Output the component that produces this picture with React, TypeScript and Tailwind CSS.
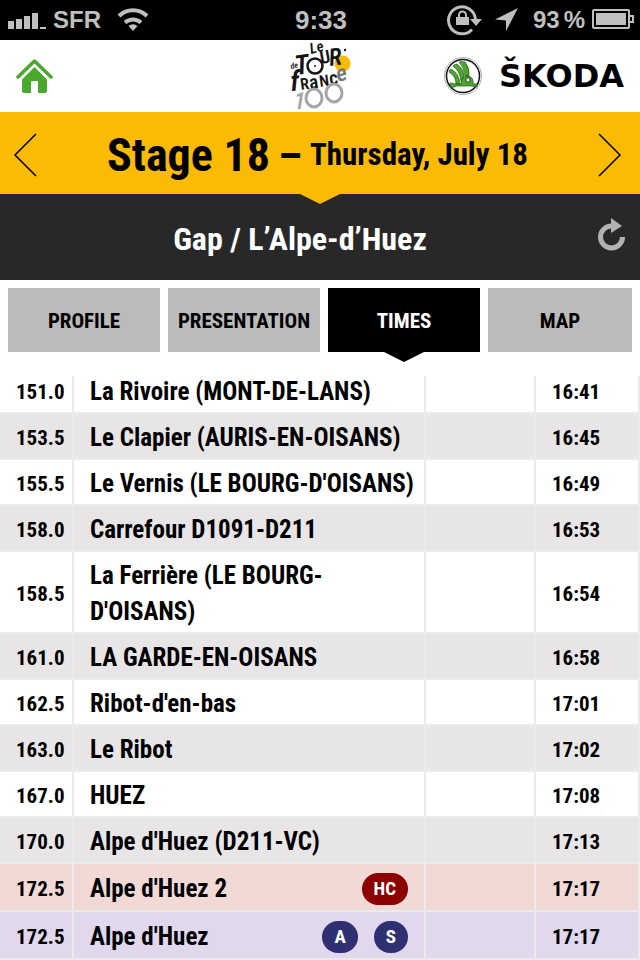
import type { ReactNode } from 'react';

interface Badge {
  label: string;
  className: string;
}

interface Stop {
  km: string;
  name: string;
  time: string;
  rowClass?: string;
  badges?: Badge[];
}

const blueBadge = 'bg-[#2f3072]';

const stops: Stop[] = [
  { km: '151.0', name: 'La Rivoire (MONT-DE-LANS)', time: '16:41' },
  { km: '153.5', name: 'Le Clapier (AURIS-EN-OISANS)', time: '16:45' },
  { km: '155.5', name: "Le Vernis (LE BOURG-D'OISANS)", time: '16:49' },
  { km: '158.0', name: 'Carrefour D1091-D211', time: '16:53' },
  { km: '158.5', name: "La Ferrière (LE BOURG-D'OISANS)", time: '16:54' },
  { km: '161.0', name: 'LA GARDE-EN-OISANS', time: '16:58' },
  { km: '162.5', name: "Ribot-d'en-bas", time: '17:01' },
  { km: '163.0', name: 'Le Ribot', time: '17:02' },
  { km: '167.0', name: 'HUEZ', time: '17:08' },
  { km: '170.0', name: "Alpe d'Huez (D211-VC)", time: '17:13' },
  {
    km: '172.5',
    name: "Alpe d'Huez 2",
    time: '17:17',
    rowClass: 'bg-[#f1dad6]',
    badges: [{ label: 'HC', className: 'bg-[#8b0000]' }],
  },
  {
    km: '172.5',
    name: "Alpe d'Huez",
    time: '17:17',
    rowClass: 'bg-[#e1d8ee]',
    badges: [
      { label: 'A', className: blueBadge },
      { label: 'S', className: blueBadge },
    ],
  },
];

const tabs = ['PROFILE', 'PRESENTATION', 'TIMES', 'MAP'];

const StatusBar = () => (
  <div className="grid h-10 grid-cols-3 items-center bg-black pr-[5px] pl-[7px] font-['Liberation_Sans',Arial,sans-serif] text-2xl font-bold text-[#bfbfbf]">
    <div className="flex items-center">
      <svg className="h-6 w-10 shrink-0" viewBox="0 0 40 24" fill="currentColor">
        <path d="M1 13h6v8H1zM9 11h6v10H9zM17 8h6v13h-6zM25 5h6v16h-6zM33 19h6v2h-6z" />
      </svg>
      <span className="ml-1.5">SFR</span>
      <svg className="ml-4 h-6 w-8 shrink-0" viewBox="0 0 32 24" fill="none" stroke="currentColor" strokeWidth="4">
        <path d="M2 8A20 20 0 0 1 30 8" />
        <path d="M8 14.500A12 12 0 0 1 24 14.500" />
        <path d="M16 23l-4.500-5a6.500 6.500 0 0 1 9 0z" fill="currentColor" stroke="none" />
      </svg>
    </div>
    <span className="text-center text-[26px]">9:33</span>
    <div className="flex items-center justify-end">
      <svg className="h-8 w-9 shrink-0" viewBox="0 0 36 32" fill="none" stroke="currentColor" strokeWidth="3">
        <path d="M25 25.500A13.500 13.500 0 1 1 28.500 15" />
        <path d="M23 15h12l-6 7z" fill="currentColor" stroke="none" />
        <path d="M9 13h13v8H9z" fill="currentColor" stroke="none" />
        <path d="M12 13v-2a3.500 3.500 0 0 1 7 0v2" strokeWidth="2" />
      </svg>
      <svg className="ml-3 h-6 w-6 shrink-0" viewBox="0 0 24 24" fill="currentColor">
        <path d="M23 0L11 23V12.500L0 11.500z" />
      </svg>
      <span className="ml-3.5">93</span>
      <span className="ml-1">%</span>
      <svg className="ml-1.5 h-6 w-11 shrink-0" viewBox="0 0 44 24" fill="none" stroke="currentColor" strokeWidth="2">
        <rect x="2" y="2" width="36" height="18" rx="1" />
        <path d="M5 5h30v12H5z" fill="currentColor" stroke="none" />
        <path d="M38 8h4v6h-4" />
      </svg>
    </div>
  </div>
);

const TourLogo = () => (
  <svg
    className="h-[72px] w-16 overflow-visible"
    viewBox="0 0 64 72"
    role="img"
    aria-label="Le Tour de France 100"
    fontFamily="'Roboto Condensed', 'Liberation Sans', sans-serif"
    fontWeight="600"
    fill="#141414"
  >
    <circle cx="54.500" cy="23.500" r="8" fill="#fbba07" />
    <text x="23" y="14" fontSize="15" fontStyle="italic" transform="rotate(-14 23 14)">Le</text>
    <text x="3" y="29" fontSize="8" fontStyle="italic" transform="rotate(-12 3 29)">de</text>
    <text x="8" y="35" fontSize="27" fontStyle="italic" transform="rotate(-8 8 35)">T</text>
    <circle cx="27" cy="26" r="7.500" fill="none" stroke="#141414" strokeWidth="2.500" />
    <circle cx="27" cy="26" r="1" />
    <text x="33" y="24" fontSize="18" transform="rotate(-10 33 24)">U</text>
    <text x="42" y="26" fontSize="24" fontStyle="italic" transform="rotate(-8 42 26)">R</text>
    <circle cx="57" cy="10" r="1.200" />
    <text x="3" y="51" fontSize="28" fontStyle="italic" transform="rotate(-4 3 51)">f</text>
    <text x="13" y="50" fontSize="16" transform="rotate(-8 13 50)">R</text>
    <text x="22" y="49" fontSize="19" transform="rotate(-8 22 49)">a</text>
    <text x="32" y="47" fontSize="16" transform="rotate(-8 32 47)">N</text>
    <text x="42" y="45" fontSize="19" transform="rotate(-8 42 45)">c</text>
    <text x="50" y="42" fontSize="23" fontStyle="italic" fill="#777" transform="rotate(-14 50 42)">e</text>
    <text x="6" y="69" fontSize="23" fontStyle="italic" fill="#a5a5a5">1</text>
    <ellipse cx="26" cy="58" rx="8" ry="9" fill="none" stroke="#a5a5a5" strokeWidth="3" />
    <ellipse cx="46" cy="53" rx="8" ry="9" fill="none" stroke="#a5a5a5" strokeWidth="3" />
  </svg>
);

const SkodaLogo = () => (
  <a href="#skoda" className="flex items-center gap-4 text-black">
    <svg className="size-10 shrink-0" viewBox="0 0 40 40">
      <circle cx="20" cy="20" r="18.500" fill="#fff" stroke="#a4afb8" />
      <circle cx="20" cy="20" r="16.500" fill="#fff" stroke="#111" strokeWidth="1.500" />
      <g fill="#4ba82e" stroke="#173d12" strokeWidth="0.600">
        <path d="M16 6q2-1 6 0 5 6 4 14h-4Q21 11 16 6z" />
        <path d="M10 10q2-2 4-2 7 5 7 14l-3 3Q17 15 10 10z" />
        <path d="M6 16q0-2 2-3 8 4 9 15h-4Q13 20 6 16z" />
        <path d="M7 27l6 1h5q0-8 7-8 6 1 5 8h4v3l-6-1H14l-6 2z" />
      </g>
      <circle cx="25" cy="24" r="2.200" fill="#fff" stroke="#173d12" />
    </svg>
    <span className="font-['DejaVu_Sans',sans-serif] text-[32px] font-bold">ŠKODA</span>
  </a>
);

const Header = () => (
  <header className="grid h-[72px] grid-cols-[1fr_auto_1fr] items-center bg-white px-4">
    <a href="#home" aria-label="Home" className="w-10">
      <svg className="h-9 w-[37px]" viewBox="0 0 37 36" fill="#4aa82d">
        <path d="M2 19L18.500 3 35 19" fill="none" stroke="#4aa82d" strokeWidth="3.500" strokeLinecap="round" strokeLinejoin="round" />
        <path d="M18.500 9L31 21.500V33a2 2 0 0 1-2 2h-7V24a1 1 0 0 0-1-1h-5a1 1 0 0 0-1 1v11H8a2 2 0 0 1-2-2V21.500z" />
      </svg>
    </a>
    <TourLogo />
    <div className="flex justify-end">
      <SkodaLogo />
    </div>
  </header>
);

const ArrowButton = ({ label, children }: { label: string; children: ReactNode }) => (
  <button type="button" aria-label={label} className="shrink-0">
    <svg className="h-11 w-6" viewBox="0 0 24 44" fill="none" stroke="#000" strokeWidth="1.500">
      {children}
    </svg>
  </button>
);

const StageBar = () => (
  <div className="relative z-10 flex h-[82px] items-center justify-between bg-[#fbba04] pt-1 pr-[18px] pl-[13px]">
    <ArrowButton label="Previous stage">
      <path d="M23 1L2 22l21 21" />
    </ArrowButton>
    <h1 className="flex items-center gap-2 font-bold whitespace-nowrap">
      <span className="text-[46px]">Stage 18</span>
      <span className="pt-0.5 text-[44px] leading-none">–</span>
      <span className="text-[31px]">Thursday, July 18</span>
    </h1>
    <ArrowButton label="Next stage">
      <path d="M1 1l21 21L1 43" />
    </ArrowButton>
    <svg className="absolute top-full left-1/2 h-[10px] w-10 -translate-x-1/2" viewBox="0 0 40 10">
      <path d="M0 0h40L20 10z" fill="#fbba04" />
    </svg>
  </div>
);

const RouteBar = () => (
  <div className="flex h-[86px] items-center bg-[#282828] pr-3 pl-1 text-white">
    <h2 className="flex-1 pt-1 text-center text-[32px] font-bold">Gap / L’Alpe-d’Huez</h2>
    <button type="button" aria-label="Refresh" className="mb-1 text-[#b2b2b2]">
      <svg className="h-9 w-8" viewBox="0 0 32 36" fill="none" stroke="currentColor" strokeWidth="5">
        <path d="M15.500 9A11 11 0 1 0 26.500 20" />
        <path d="M15 1l11 8-11 7z" fill="currentColor" stroke="none" />
      </svg>
    </button>
  </div>
);

const Tabs = () => (
  <nav className="grid h-16 grid-cols-[152fr_152fr_152fr_144fr] gap-2 px-2">
    {tabs.map((tab) => {
      const active = tab === 'TIMES';
      return (
        <button
          key={tab}
          type="button"
          aria-current={active ? 'page' : undefined}
          className={`relative pt-1 text-[21px] font-bold ${active ? 'bg-black text-white' : 'bg-[#bbbbbb] text-black'}`}
        >
          {tab}
          {active && (
            <svg className="absolute top-full left-1/2 h-[10px] w-10 -translate-x-1/2" viewBox="0 0 40 10">
              <path d="M0 0h40L20 10z" />
            </svg>
          )}
        </button>
      );
    })}
  </nav>
);

const StopRow = ({ stop, index }: { stop: Stop; index: number }) => {
  const background = stop.rowClass ?? (index % 2 ? 'bg-[#e7e5e6]' : 'bg-white');
  const spacing = index === 0 ? 'pt-0.5 pb-1.5 leading-7' : stop.badges ? 'pt-[7px] pb-[3px] leading-9' : 'pt-1.5 pb-0.5 leading-9';
  const cell = `border-r-2 border-b-2 border-[#ebebeb] pl-4 ${spacing}`;

  return (
    <tr className={background}>
      <td className={`${cell} text-[21px]`}>{stop.km}</td>
      <td className={`${cell} text-[25px] ${stop.badges ? 'pr-4' : 'pr-2'}`}>
        <div className="flex items-center justify-between">
          <span>{stop.name}</span>
          {stop.badges && (
            <span className="flex gap-4">
              {stop.badges.map((badge) => (
                <span key={badge.label} className={`rounded-full px-3 text-[19px] leading-8 text-white ${badge.className}`}>
                  {badge.label}
                </span>
              ))}
            </span>
          )}
        </div>
      </td>
      <td className={cell} />
      <td className={`${cell} text-[21px]`}>{stop.time}</td>
    </tr>
  );
};

const App = () => {
  return (
    <div className="min-h-screen bg-white font-['Roboto_Condensed','Liberation_Sans_Narrow',sans-serif] text-black">
      <StatusBar />
      <Header />
      <StageBar />
      <RouteBar />
      <main className="pt-2">
        <Tabs />
        <table className="mt-6 w-full table-fixed border-separate border-spacing-0 font-bold">
          <colgroup>
            <col className="w-[74px]" />
            <col />
            <col className="w-[110px]" />
            <col className="w-[104px]" />
          </colgroup>
          <tbody>
            {stops.map((stop, index) => (
              <StopRow key={`${stop.km}-${stop.name}`} stop={stop} index={index} />
            ))}
          </tbody>
        </table>
      </main>
    </div>
  );
};

export default App;
